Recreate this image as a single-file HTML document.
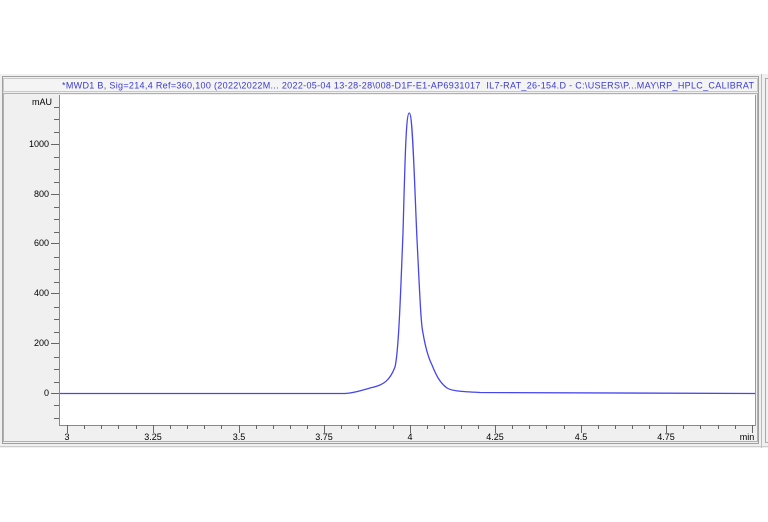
<!DOCTYPE html>
<html><head><meta charset="utf-8"><style>
html,body{margin:0;padding:0;background:#fff;width:768px;height:522px;overflow:hidden;font-family:"Liberation Sans",Arial,sans-serif}
</style></head><body>
<svg width="768" height="522" xmlns="http://www.w3.org/2000/svg" style="position:absolute;left:0;top:0">
<rect x="0" y="74" width="768" height="374" fill="#f0f0f0"/>
<rect x="2.5" y="76.5" width="756" height="367" fill="#f0f0f0" stroke="#a0a0a0"/>
<rect x="3.5" y="78.5" width="754" height="13" fill="#f4f4f4" stroke="#c8c8c8"/>
<text x="62" y="88.5" font-size="9" fill="#3a3ad0" textLength="692" lengthAdjust="spacing" font-family="Liberation Sans, Arial, sans-serif">*MWD1 B, Sig=214,4 Ref=360,100 (2022\2022M... 2022-05-04 13-28-28\008-D1F-E1-AP6931017&#160;&#160;IL7-RAT_26-154.D - C:\USERS\P...MAY\RP_HPLC_CALIBRAT</text>
<rect x="3.5" y="93.5" width="754" height="348" fill="#f0f0f0" stroke="#b0b0b0"/>
<rect x="59" y="95" width="697" height="330" fill="#fff"/>
<line x1="59.5" y1="95" x2="59.5" y2="425" stroke="#888"/>
<line x1="59" y1="425.5" x2="756" y2="425.5" stroke="#888"/>
<line x1="755.5" y1="95" x2="755.5" y2="426" stroke="#999"/>
<line x1="761.5" y1="74" x2="761.5" y2="448" stroke="#bbb"/>
<rect x="765.5" y="78.5" width="4" height="364" fill="#f0f0f0" stroke="#aaa"/>
<line x1="0" y1="446.5" x2="768" y2="446.5" stroke="#ccc"/>
<g stroke="#666" stroke-width="1">
<path d="M54,107.5h5M54,119.5h5M54,132.5h5M54,157.5h5M54,169.5h5M54,182.5h5M54,207.5h5M54,219.5h5M54,232.5h5M54,257.5h5M54,269.5h5M54,282.5h5M54,307.5h5M54,319.5h5M54,332.5h5M54,357.5h5M54,369.5h5M54,382.5h5M54,405.5h5M54,418.5h5"/>
<path d="M51,144.5h8M51,194.5h8M51,243.5h8M51,293.5h8M51,343.5h8M51,393.5h8"/>
</g>
<g font-size="9" fill="#000" text-anchor="end">
<text x="52" y="105">mAU</text>
<text x="49" y="147">1000</text>
<text x="49" y="197">800</text>
<text x="49" y="246">600</text>
<text x="49" y="296">400</text>
<text x="49" y="346">200</text>
<text x="49" y="396">0</text>
</g>
<g stroke="#666">
<path d="M67.5,425v8M153.5,425v8M239.5,425v8M324.5,425v8M410.5,425v8M495.5,425v8M581.5,425v8M666.5,425v8M752.5,425v8"/>
<path d="M84.5,425v4M101.5,425v4M118.5,425v4M136.5,425v4M170.5,425v4M187.5,425v4M204.5,425v4M221.5,425v4M256.5,425v4M273.5,425v4M290.5,425v4M307.5,425v4M341.5,425v4M358.5,425v4M375.5,425v4M393.5,425v4M427.5,425v4M444.5,425v4M461.5,425v4M478.5,425v4M512.5,425v4M529.5,425v4M546.5,425v4M564.5,425v4M598.5,425v4M615.5,425v4M632.5,425v4M649.5,425v4M683.5,425v4M700.5,425v4M718.5,425v4M735.5,425v4"/>
</g>
<g font-size="9" fill="#000" text-anchor="middle">
<text x="67" y="440">3</text><text x="153" y="440">3.25</text><text x="239" y="440">3.5</text>
<text x="324" y="440">3.75</text><text x="410" y="440">4</text><text x="495" y="440">4.25</text>
<text x="581" y="440">4.5</text><text x="666" y="440">4.75</text><text x="747" y="440">min</text>
</g>
<path d="M60,393.5 L345,393.5 C356,393 362,390 372,387.5 C384,385 390,380 395,367 C399,350 401,280 403,233 C405,160 406,113 409.3,113 C412.5,113 414,170 416.7,233 C420,300 421,325 423,333 C425,345 428,357 432,365 C436,375 440,383 447,388 C452,391 460,391.5 480,392.5 L755,393.5" fill="none" stroke="#4646f0" stroke-width="1.3"/>
</svg>
</body></html>
